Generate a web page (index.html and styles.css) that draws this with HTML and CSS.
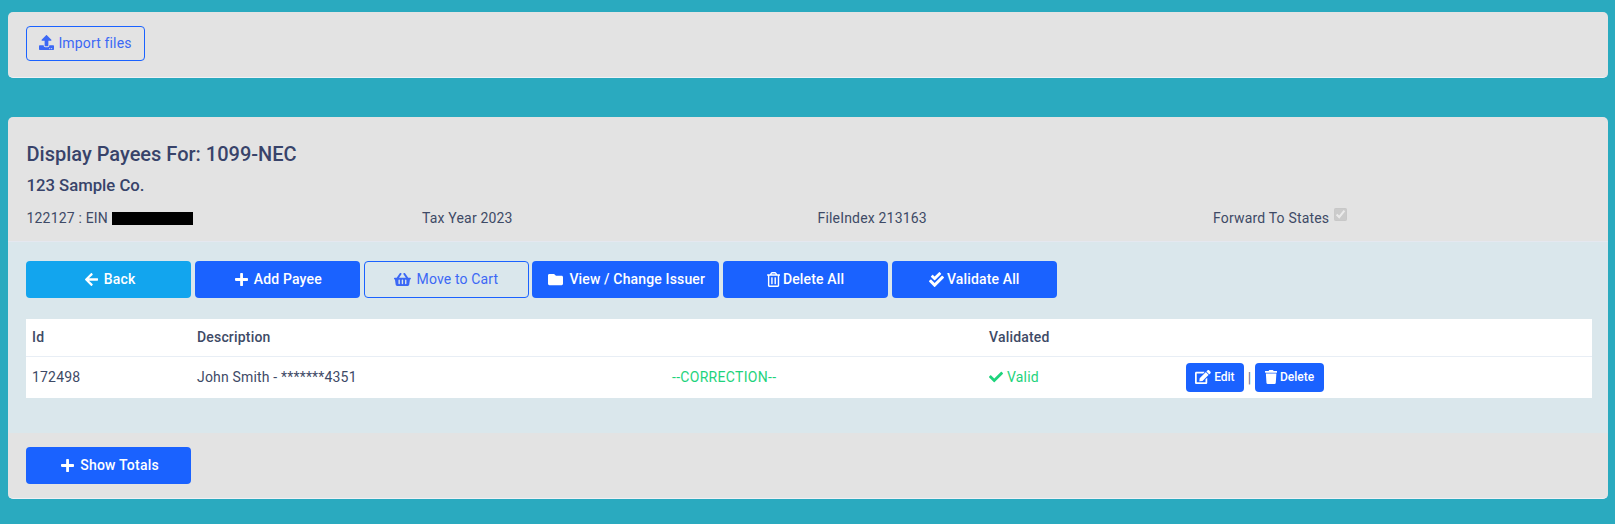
FILE: index.html
```html
<!DOCTYPE html>
<html lang="en">
<head>
<meta charset="utf-8">
<title>Display Payees</title>
<link rel="stylesheet" href="styles.css">
</head>
<body>
<section class="card top-card">
  <button class="btn btn-outline btn-import"><svg class="ico" viewBox="0 0 512 512"><path d="M296 384h-80c-13.3 0-24-10.7-24-24V192h-87.7c-17.8 0-26.7-21.5-14.1-34.1L242.3 5.7c7.5-7.5 19.8-7.5 27.3 0l152.2 152.2c12.6 12.6 3.7 34.1-14.1 34.1H320v168c0 13.3-10.7 24-24 24zm216-8v112c0 13.3-10.7 24-24 24H24c-13.3 0-24-10.7-24-24V376c0-13.3 10.7-24 24-24h136v8c0 30.9 25.1 56 56 56h80c30.9 0 56-25.1 56-56v-8h136c13.3 0 24 10.7 24 24zm-124 88c0-11-9-20-20-20s-20 9-20 20 9 20 20 20 20-9 20-20zm64 0c0-11-9-20-20-20s-20 9-20 20 9 20 20 20 20-9 20-20z"/></svg>Import files</button>
</section>
<section class="card main-card">
  <header class="head">
    <h1>Display Payees For: 1099-NEC</h1>
    <h2>123 Sample Co.</h2>
    <div class="info">
      <div>122127 : EIN <span class="redact"></span></div>
      <div>Tax Year 2023</div>
      <div>FileIndex 213163</div>
      <div>Forward To States <input class="chk" type="checkbox" checked disabled></div>
    </div>
  </header>
  <div class="band">
    <div class="actions">
      <button class="btn btn-info"><svg class="ico" viewBox="0 0 448 512"><path d="M257.5 445.1l-22.2 22.2c-9.4 9.4-24.6 9.4-33.9 0L7 273c-9.4-9.4-9.4-24.6 0-33.9L201.4 44.7c9.4-9.4 24.6-9.4 33.9 0l22.2 22.2c9.5 9.5 9.3 25-.4 34.3L136.6 216H424c13.3 0 24 10.7 24 24v32c0 13.3-10.7 24-24 24H136.6l120.5 114.8c9.8 9.3 10 24.8.4 34.3z"/></svg>Back</button>
      <button class="btn btn-primary"><svg class="ico" viewBox="0 0 448 512"><path d="M416 208H272V64c0-17.67-14.33-32-32-32h-32c-17.67 0-32 14.33-32 32v144H32c-17.67 0-32 14.33-32 32v32c0 17.67 14.33 32 32 32h144v144c0 17.67 14.33 32 32 32h32c17.67 0 32-14.33 32-32V304h144c17.67 0 32-14.33 32-32v-32c0-17.67-14.33-32-32-32z"/></svg>Add Payee</button>
      <button class="btn btn-outline"><svg class="ico" viewBox="0 0 576 512"><path d="M576 216v16c0 13.255-10.745 24-24 24h-8l-26.113 182.788C514.509 462.435 494.257 480 470.37 480H105.63c-23.887 0-44.139-17.565-47.518-41.212L32 256h-8c-13.255 0-24-10.745-24-24v-16c0-13.255 10.745-24 24-24h67.341l106.78-146.821c10.395-14.292 30.407-17.453 44.701-7.058 14.293 10.395 17.453 30.408 7.058 44.701L170.477 192h235.046L326.12 82.821c-10.395-14.292-7.234-34.306 7.059-44.701 14.291-10.395 34.306-7.235 44.701 7.058L484.659 192H552c13.255 0 24 10.745 24 24zM312 392V280c0-13.255-10.745-24-24-24s-24 10.745-24 24v112c0 13.255 10.745 24 24 24s24-10.745 24-24zm112 0V280c0-13.255-10.745-24-24-24s-24 10.745-24 24v112c0 13.255 10.745 24 24 24s24-10.745 24-24zm-224 0V280c0-13.255-10.745-24-24-24s-24 10.745-24 24v112c0 13.255 10.745 24 24 24s24-10.745 24-24z"/></svg>Move to Cart</button>
      <button class="btn btn-primary btn-wide"><svg class="ico" viewBox="0 0 512 512"><path d="M464 128H272l-64-64H48C21.49 64 0 85.49 0 112v288c0 26.51 21.49 48 48 48h416c26.51 0 48-21.49 48-48V176c0-26.51-21.49-48-48-48z"/></svg>View / Change Issuer</button>
      <button class="btn btn-primary btn-tight"><svg class="ico" viewBox="0 0 448 512"><path d="M268 416h24a12 12 0 0 0 12-12V188a12 12 0 0 0-12-12h-24a12 12 0 0 0-12 12v216a12 12 0 0 0 12 12zM432 80h-82.41l-34-56.7A48 48 0 0 0 274.41 0H173.59a48 48 0 0 0-41.16 23.3L98.41 80H16A16 16 0 0 0 0 96v16a16 16 0 0 0 16 16h16v336a48 48 0 0 0 48 48h288a48 48 0 0 0 48-48V128h16a16 16 0 0 0 16-16V96a16 16 0 0 0-16-16zM171.84 50.91A6 6 0 0 1 177 48h94a6 6 0 0 1 5.15 2.91L293.61 80H154.39zM368 464H80V128h288zm-212-48h24a12 12 0 0 0 12-12V188a12 12 0 0 0-12-12h-24a12 12 0 0 0-12 12v216a12 12 0 0 0 12 12z"/></svg>Delete All</button>
      <button class="btn btn-primary btn-tight"><svg class="ico" viewBox="0 0 512 512"><path d="M505 174.8l-39.6-39.6c-9.4-9.4-24.6-9.4-33.9 0L192 374.7 80.6 263.2c-9.4-9.4-24.6-9.4-33.9 0L7 302.9c-9.4 9.4-9.4 24.6 0 34L175 505c9.4 9.4 24.6 9.4 33.9 0l296-296.2c9.4-9.5 9.4-24.7.1-34zm-324.3 106c6.2 6.3 16.4 6.3 22.6 0l208-208.2c6.2-6.3 6.2-16.4 0-22.6L366.1 4.7c-6.2-6.3-16.4-6.3-22.6 0L192 156.2l-55.4-55.5c-6.2-6.3-16.4-6.3-22.6 0L68.7 146c-6.2 6.3-6.2 16.4 0 22.6l112 112.2z"/></svg>Validate All</button>
    </div>
    <table class="payees">
      <colgroup>
        <col class="c-id"><col class="c-desc"><col class="c-corr"><col class="c-val"><col>
      </colgroup>
      <thead>
        <tr><th>Id</th><th>Description</th><th></th><th>Validated</th><th></th></tr>
      </thead>
      <tbody>
        <tr>
          <td>172498</td>
          <td>John Smith - *******4351</td>
          <td class="green corr">--CORRECTION--</td>
          <td class="green"><svg class="ico-check" viewBox="0 0 512 512"><path d="M173.898 439.404l-166.4-166.4c-9.997-9.997-9.997-26.206 0-36.204l36.203-36.204c9.997-9.998 26.207-9.998 36.204 0L192 312.69 432.095 72.596c9.997-9.997 26.207-9.997 36.204 0l36.203 36.204c9.997 9.997 9.997 26.206 0 36.204l-294.4 294.401c-9.998 9.997-26.207 9.997-36.204-.001z"/></svg>Valid</td>
          <td>
            <button class="btn btn-primary btn-sm btn-edit"><svg class="ico" viewBox="0 0 576 512"><path d="M402.6 83.2l90.2 90.2c3.8 3.8 3.8 10 0 13.8L274.4 405.6l-92.8 10.3c-12.4 1.4-22.9-9.1-21.5-21.5l10.3-92.8L388.8 83.2c3.8-3.8 10-3.8 13.8 0zm162-22.9l-48.8-48.8c-15.2-15.2-39.9-15.2-55.2 0l-35.4 35.4c-3.8 3.8-3.8 10 0 13.8l90.2 90.2c3.8 3.8 10 3.8 13.8 0l35.4-35.4c15.2-15.3 15.2-40 0-55.2zM384 346.2V448H64V128h229.8c3.2 0 6.2-1.3 8.5-3.5l40-40c7.6-7.6 2.2-20.5-8.5-20.5H48C21.5 64 0 85.5 0 112v352c0 26.5 21.5 48 48 48h352c26.5 0 48-21.5 48-48V306.2c0-10.7-12.9-16-20.5-8.5l-40 40c-2.2 2.3-3.5 5.3-3.5 8.5z"/></svg>Edit</button>
            <span class="sep">|</span>
            <button class="btn btn-primary btn-sm btn-del"><svg class="ico" viewBox="0 0 448 512"><path d="M432 32H312l-9.4-18.7A24 24 0 0 0 281.1 0H166.8a23.72 23.72 0 0 0-21.4 13.3L136 32H16A16 16 0 0 0 0 48v32a16 16 0 0 0 16 16h416a16 16 0 0 0 16-16V48a16 16 0 0 0-16-16zM53.2 467a48 48 0 0 0 47.9 45h245.8a48 48 0 0 0 47.9-45L416 128H32z"/></svg>Delete</button>
          </td>
        </tr>
      </tbody>
    </table>
  </div>
  <footer class="foot">
    <button class="btn btn-primary btn-totals"><svg class="ico" viewBox="0 0 448 512"><path d="M416 208H272V64c0-17.67-14.33-32-32-32h-32c-17.67 0-32 14.33-32 32v144H32c-17.67 0-32 14.33-32 32v32c0 17.67 14.33 32 32 32h144v144c0 17.67 14.33 32 32 32h32c17.67 0 32-14.33 32-32V304h144c17.67 0 32-14.33 32-32v-32c0-17.67-14.33-32-32-32z"/></svg>Show Totals</button>
  </footer>
</section>
</body>
</html>
```
FILE: styles.css
```css
* { box-sizing: border-box; }
html, body { height: 100%; }
body {
  margin: 0;
  padding: 12px 7px 0 8px;
  background: #2aaabf;
  font-family: Roboto, "Liberation Sans", sans-serif;
  font-size: 14px;
  letter-spacing: 0.18px;
  color: #3e4a66;
  overflow: hidden;
}
.card {
  background: #e3e3e3;
  border-radius: 5px;
  border-bottom: 1px solid #f0f0f5;
  overflow: hidden;
}
.top-card { height: 66px; padding: 14px 18px 0 18px; margin-bottom: 39px; }
.main-card { height: 382px; }
.head { height: 125px; padding: 25px 18px 0 18.5px; border-bottom: 1px solid #e4e8f0; }
h1 { margin: 0 0 10px; font-size: 20px; font-weight: 500; line-height: 24px; letter-spacing: 0; color: #38436a; }
h2 { margin: 0 0 12px; font-size: 16.7px; font-weight: 500; line-height: 20px; letter-spacing: 0; color: #38436a; }
.info { display: grid; grid-template-columns: repeat(4, 395.5px); line-height: 20px; }
.redact { display: inline-block; width: 81px; height: 13px; background: #000; vertical-align: -2px; margin-left: 0.5px; }
.chk { margin: 0 0 0 1.5px; width: 13px; height: 13px; vertical-align: 2px; }
.band { height: 191px; background: #dae7ec; padding: 19px 18px 0 18px; }
.actions { display: flex; gap: 3.75px; margin-bottom: 21px; }
.btn {
  display: inline-flex;
  align-items: center;
  justify-content: center;
  gap: 6px;
  width: 165px;
  height: 37px;
  padding: 0 0 1px 2px;
  border: 1px solid transparent;
  border-radius: 4px;
  font-family: inherit;
  font-size: 14px;
  font-weight: 500;
  letter-spacing: 0.15px;
}
.ico { height: 15px; width: auto; fill: currentColor; flex: none; }
.btn-primary { background: #1a62ff; color: #fff; }
.btn-info { background: #12a5ee; color: #fff; padding-left: 3px; }
.btn-outline { background: transparent; border-color: #1a62ff; color: #3c68f5; font-weight: 400; padding-left: 0; }
.btn-wide { width: 187px; }
.btn-tight { gap: 3px; padding-left: 0; }
.btn-totals { letter-spacing: 0.22px; padding-left: 3px; }
.btn-import { width: 119px; height: 35px; gap: 4px; padding-bottom: 2px; }
.btn-sm { height: 29px; padding: 0; font-size: 12px; gap: 3px; letter-spacing: 0; vertical-align: middle; }
.btn-edit { width: 58px; }
.btn-del { width: 69px; }
.btn-sm .ico { height: 14px; }
.payees { width: 1566px; table-layout: fixed; border-collapse: collapse; background: #fff; }
.c-id { width: 165px; }
.c-desc { width: 475px; }
.c-corr { width: 317px; }
.c-val { width: 197px; }
.payees th { height: 37px; padding: 0 6px; text-align: left; font-weight: 500; border-bottom: 1px solid #e8eef5; }
.payees td { height: 42px; padding: 0 6px; }
.green { color: #1ed37c; }
.corr { letter-spacing: 0.3px; }
.ico-check { width: 14px; height: 14px; fill: currentColor; vertical-align: -2px; margin-right: 4px; }
.sep { color: #6a7488; vertical-align: middle; }
.foot { padding: 14px 18px 0; }
```
